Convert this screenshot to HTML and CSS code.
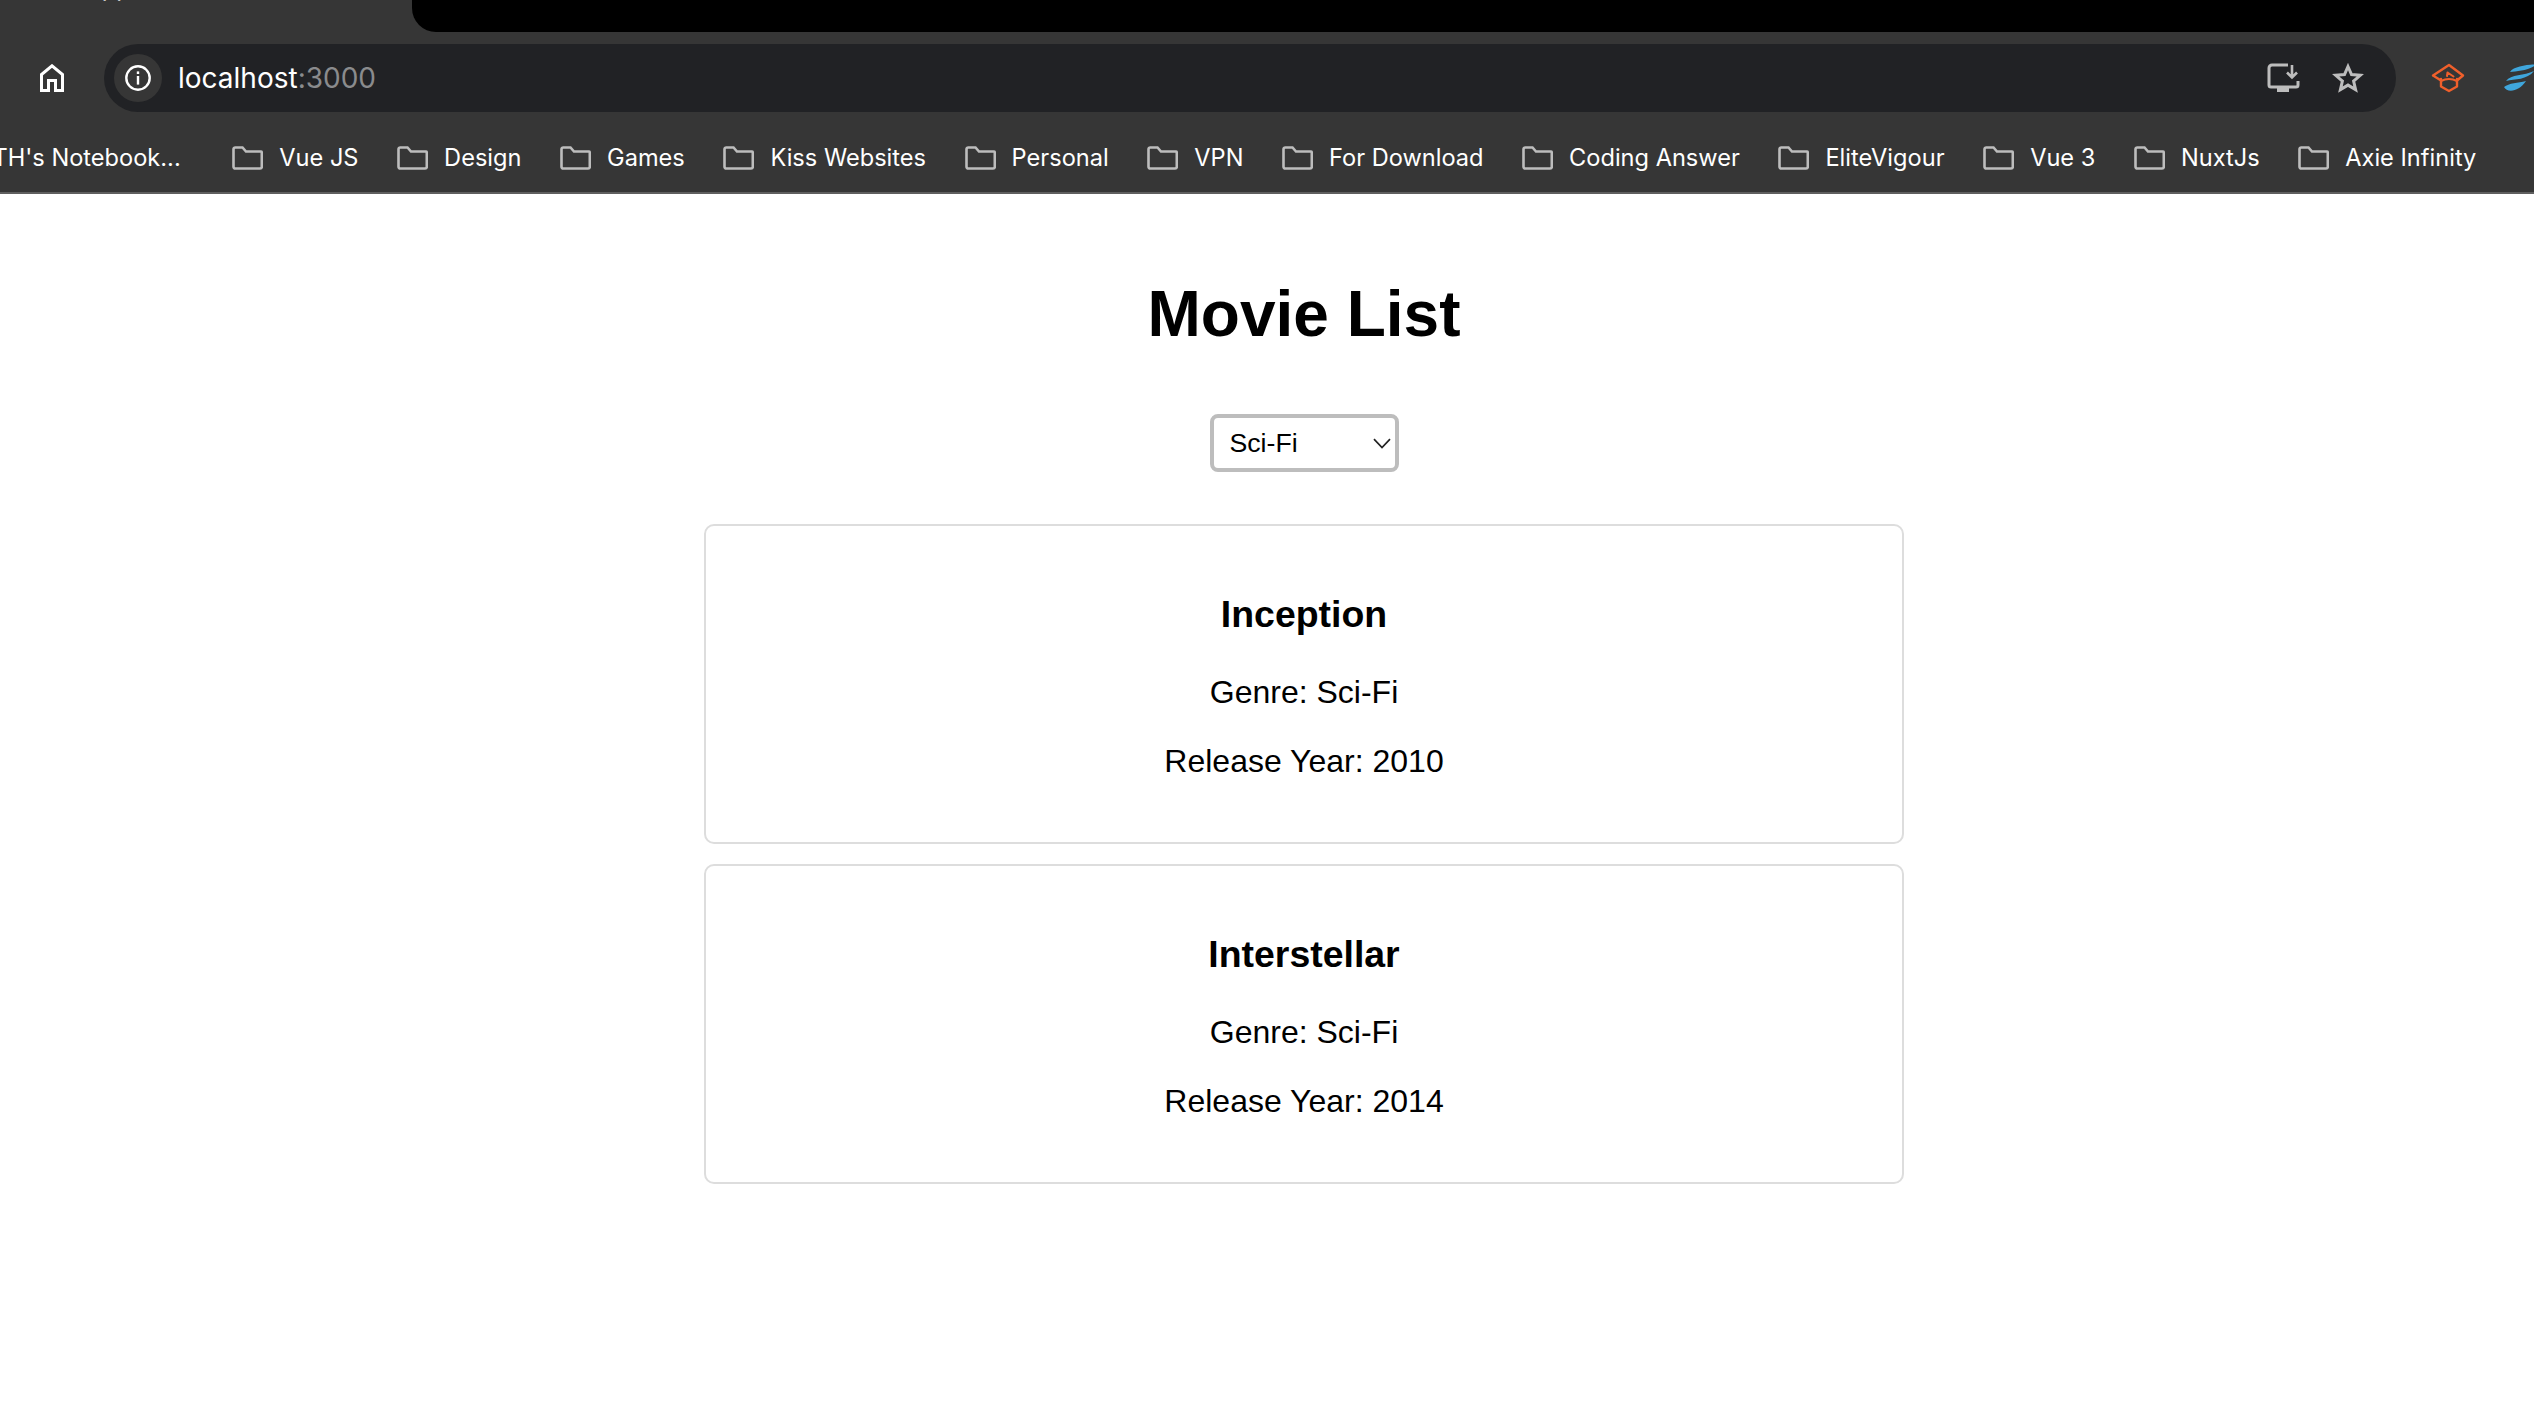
FILE: index.html
```html
<!DOCTYPE html>
<html lang="en">
<head>
<meta charset="utf-8">
<title>Movie List</title>
<link rel="stylesheet" href="styles.css">
</head>
<body>
<header class="chrome">
  <div class="tabstrip">
    <div class="tab"><span class="tab-title">React App</span></div>
    <div class="tab-fill"></div>
  </div>
  <div class="toolbar">
    <svg class="home" width="24" height="28" viewBox="0 0 24 28"><path d="M1.5 26.5V10.5L12 1.8 22.5 10.5V26.5H15.5V16.5H8.5V26.5Z" fill="none" stroke="#fff" stroke-width="3"/></svg>
    <div class="omnibox">
      <div class="chip"><svg width="28" height="28" viewBox="0 0 28 28"><circle cx="14" cy="14" r="11.7" fill="none" stroke="#fff" stroke-width="2.4"/><rect x="12.8" y="7.4" width="2.4" height="2.6" fill="#fff"/><rect x="12.8" y="12" width="2.4" height="8.6" fill="#fff"/></svg></div>
      <span class="url">localhost<span class="port">:3000</span></span>
      <svg class="install" width="33" height="30" viewBox="0 0 33 30"><path d="M21 2H5A3 3 0 0 0 2 5V22A2 2 0 0 0 4 24H29A2 2 0 0 0 31 22V18" fill="none" stroke="#bdbdbd" stroke-width="3"/><rect x="10" y="24" width="12" height="5" fill="#bdbdbd"/><path d="M25 2V14M20 9.500L25 14.500 30 9.500" fill="none" stroke="#bdbdbd" stroke-width="2.600"/></svg>
      <svg class="star" width="32" height="32" viewBox="0 0 32 32"><path d="M16 4.500L19.500 12.600 28.300 13.300 21.600 19 23.600 27.600 16 23.100 8.400 27.600 10.400 19 3.700 13.300 12.500 12.600Z" fill="none" stroke="#bdbdbd" stroke-width="3"/></svg>
    </div>
    <svg class="ext-cap" width="34" height="30" viewBox="0 0 34 30"><path d="M26 17.500L32 12.500 18 2 2 12.500 10 17.500" fill="none" stroke="#f05f2b" stroke-width="2.400" stroke-linejoin="round" stroke-linecap="round"/><path d="M10 16V23.500L18 28 26 23.500V16" fill="none" stroke="#f05f2b" stroke-width="2.400" stroke-linejoin="round" stroke-linecap="round"/><path d="M10 18Q18 14 26 18M22.500 13.500L16.500 9.500M16.500 9.500L16 13" fill="none" stroke="#f05f2b" stroke-width="2" stroke-linecap="round"/></svg>
    <svg class="ext-wing" width="34" height="30" viewBox="0 0 34 30"><path d="M34 1C24 2 11 3 7 9 14 8 26 8 34 1Z M31 8C21 13 8 11 3 18 12 16 24 17 31 8Z M23 18C15 20 6 20 1 24 4 30 16 29 23 18Z" fill="#3fa6dc"/></svg>
  </div>
  <nav class="bookmarks">
    <span class="bm bm-first">TH's Notebook...</span>
    <a class="bm"><svg class="folder" viewBox="0 0 32 24"><use href="#fold"/></svg>Vue JS</a>
    <a class="bm"><svg class="folder" viewBox="0 0 32 24"><use href="#fold"/></svg>Design</a>
    <a class="bm"><svg class="folder" viewBox="0 0 32 24"><use href="#fold"/></svg>Games</a>
    <a class="bm"><svg class="folder" viewBox="0 0 32 24"><use href="#fold"/></svg>Kiss Websites</a>
    <a class="bm"><svg class="folder" viewBox="0 0 32 24"><use href="#fold"/></svg>Personal</a>
    <a class="bm"><svg class="folder" viewBox="0 0 32 24"><use href="#fold"/></svg>VPN</a>
    <a class="bm"><svg class="folder" viewBox="0 0 32 24"><use href="#fold"/></svg>For Download</a>
    <a class="bm"><svg class="folder" viewBox="0 0 32 24"><use href="#fold"/></svg>Coding Answer</a>
    <a class="bm"><svg class="folder" viewBox="0 0 32 24"><use href="#fold"/></svg>EliteVigour</a>
    <a class="bm"><svg class="folder" viewBox="0 0 32 24"><use href="#fold"/></svg>Vue 3</a>
    <a class="bm"><svg class="folder" viewBox="0 0 32 24"><use href="#fold"/></svg>NuxtJs</a>
    <a class="bm"><svg class="folder" viewBox="0 0 32 24"><use href="#fold"/></svg>Axie Infinity</a>
  </nav>
  <svg class="defs" width="0" height="0"><defs><path id="fold" d="M2.500 20.500V3.200A1.700 1.700 0 0 1 4.200 1.500H11.500L15 5.500H29.800A1 1 0 0 1 30.800 6.500V20.800A1.700 1.700 0 0 1 29.100 22.500H4.200A1.700 1.700 0 0 1 2.500 20.800Z" fill="none" stroke="#bdbdbd" stroke-width="2.600"/></defs></svg>
</header>
<main class="app">
  <h1 class="title">Movie List</h1>
  <div class="filter">
    <div class="select-wrap">
      <select class="select"><option>Sci-Fi</option><option>Drama</option><option>Action</option></select>
      <svg class="chevron" width="18" height="11" viewBox="0 0 18 11"><path d="M1 1.200L9 9.500 17 1.200" fill="none" stroke="#222" stroke-width="1.700"/></svg>
    </div>
  </div>
  <section class="list">
    <article class="card">
      <h3 class="card-title">Inception</h3>
      <p class="card-text">Genre: Sci-Fi</p>
      <p class="card-text">Release Year: 2010</p>
    </article>
    <article class="card">
      <h3 class="card-title">Interstellar</h3>
      <p class="card-text">Genre: Sci-Fi</p>
      <p class="card-text">Release Year: 2014</p>
    </article>
  </section>
</main>
</body>
</html>
```
FILE: styles.css
```css
* { box-sizing: border-box; }
html, body { margin: 0; padding: 0; background: #fff; }
body { width: 2534px; height: 1414px; overflow: hidden; font-family: "Liberation Sans", Arial, sans-serif; color: #000; }

.chrome { background: #363636; height: 194px; border-bottom: 2px solid #5f5f5f; overflow: hidden; font-family: Inter, "Noto Sans", sans-serif; color: #fff; }

.tabstrip { display: flex; height: 32px; }
.tab { width: 412px; height: 32px; overflow: hidden; padding-left: 14px; }
.tab-title { display: block; font-size: 24px; line-height: 30px; margin-top: -27px; color: #e8e8e8; }
.tab-fill { flex: 1; background: #000; border-bottom-left-radius: 24px; }

.toolbar { display: flex; align-items: center; height: 92px; padding: 12px 0 12px 40px; }
.home { flex: none; margin-right: 40px; }
.omnibox { flex: none; display: flex; align-items: center; width: 2292px; height: 68px; border-radius: 34px; background: #212225; padding: 0 32px 0 10px; }
.chip { flex: none; display: flex; align-items: center; justify-content: center; width: 48px; height: 48px; border-radius: 50%; background: #363636; }
.url { flex: 1; margin-left: 16px; font-size: 28px; line-height: 34px; }
.port { color: #8a8b8d; }
.install { flex: none; margin-right: 32px; }
.star { flex: none; }
.ext-cap { flex: none; margin-left: 35px; }
.ext-wing { flex: none; margin-left: 38px; }

.bookmarks { display: flex; align-items: center; height: 66px; padding-top: 2px; gap: 37.6px; margin-left: -7.5px; white-space: nowrap; font-size: 23.6px; line-height: 30px; }
.bm { display: flex; flex: none; align-items: center; gap: 16px; }
.bm-first { margin-right: 13px; }
.folder { flex: none; width: 32px; height: 24px; }
.defs { position: absolute; }

.app { padding: 40px 0 0 74px; text-align: center; }
.title { margin: 42.88px 0 62.88px; font-size: 64px; line-height: 74px; font-weight: 700; }
.filter { margin: 0 0 52px; display: flex; justify-content: center; }
.select-wrap { position: relative; width: 189px; height: 58px; }
.select { appearance: none; width: 100%; height: 100%; padding: 0 0 0 16px; border: 4px solid #bdbdbd; border-radius: 8px; background: #fff; color: #000; font: 26.67px "Liberation Sans", Arial, sans-serif; }
.chevron { position: absolute; top: 24px; right: 8px; pointer-events: none; }

.list { display: flex; flex-direction: column; align-items: center; gap: 20px; }
.card { width: 1200px; height: 320px; padding: 30px; border: 2px solid #ddd; border-radius: 10px; }
.card-title { margin: 37.44px 0; font-size: 37.44px; line-height: 43px; font-weight: 700; }
.card-text { margin: 32px 0; font-size: 32px; line-height: 37px; }
```
